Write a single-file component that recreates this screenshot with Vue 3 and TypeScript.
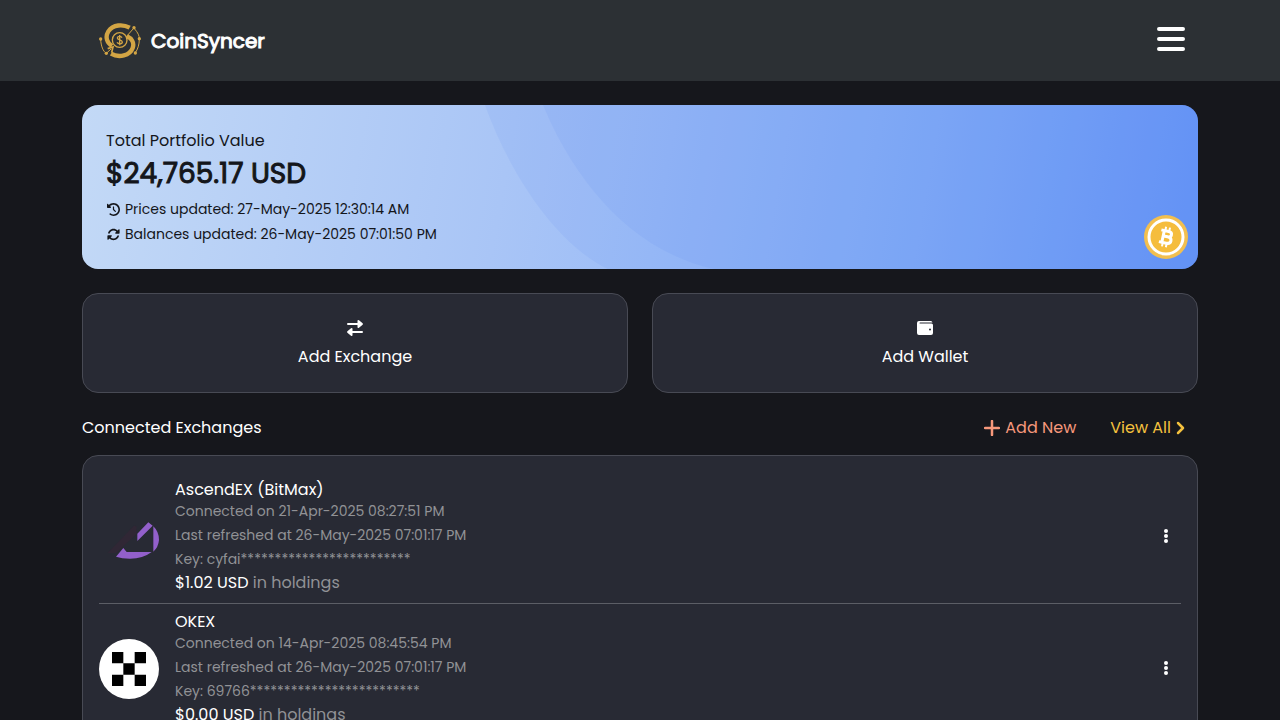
<script setup lang="ts">
interface Exchange {
  id: string
  name: string
  connected: string
  refreshed: string
  key: string
  value: string
}

const exchanges: Exchange[] = [
  {
    id: 'ascendex',
    name: 'AscendEX (BitMax)',
    connected: '21-Apr-2025 08:27:51 PM',
    refreshed: '26-May-2025 07:01:17 PM',
    key: 'cyfai' + '*'.repeat(25),
    value: '$1.02 USD',
  },
  {
    id: 'okex',
    name: 'OKEX',
    connected: '14-Apr-2025 08:45:54 PM',
    refreshed: '26-May-2025 07:01:17 PM',
    key: '69766' + '*'.repeat(25),
    value: '$0.00 USD',
  },
]
</script>

<template>
  <header class="topbar">
    <div class="container topbar-inner">
      <a class="brand" href="#">
        <svg class="brand-mark" viewBox="0 0 126 108" aria-hidden="true">
          <g fill="none" stroke="#d3a544">
            <path d="M92 14C72 3 42 4 28 25C17 43 25 60 39 69" stroke-width="13" />
            <path d="M84 40C97 46 107 58 101 75C93 98 60 106 36 92" stroke-width="13" />
            <circle cx="62" cy="51" r="22" stroke-width="4" />
            <path d="M82 41L103 17M107 18C117 29 121 39 121 47C121 66 116 79 109 89M5 49C6 69 12 85 22 91L36 78" stroke-width="3" />
            <path d="M26 77L42 72L38 89" stroke-width="5" />
            <path d="M69 44C66 38 55 39 55 45C55 52 70 49 70 57C70 64 58 64 54 58M62 36V67" stroke-width="4" />
          </g>
          <g fill="#d3a544">
            <circle cx="105" cy="14" r="5" />
            <circle cx="121" cy="47" r="5" />
            <circle cx="109" cy="90" r="5" />
            <circle cx="5" cy="48" r="5" />
            <circle cx="22" cy="91" r="5" />
          </g>
        </svg>
        <span>CoinSyncer</span>
      </a>
      <button class="menu" type="button" aria-label="Menu">
        <svg viewBox="0 0 28 24" aria-hidden="true">
          <path d="M2 2H26M2 12H26M2 22H26" fill="none" stroke="currentColor" stroke-width="4" stroke-linecap="round" />
        </svg>
      </button>
    </div>
  </header>

  <main class="container">
    <section class="banner">
      <svg class="waves" viewBox="0 0 1116 164" preserveAspectRatio="none" aria-hidden="true">
        <path d="M403 0C428 70 475 140 526 164H1116V0Z" />
        <path d="M461 0C490 70 545 145 632 164H1116V0Z" />
      </svg>
      <div class="banner-text">
        <div class="label">Total Portfolio Value</div>
        <div class="total">$24,765.17 USD</div>
        <div class="stamp">
          <svg viewBox="0 0 512 512" aria-hidden="true">
            <path d="M75 75L41 41C25.9 25.9 0 36.6 0 57.9V168c0 13.3 10.7 24 24 24H134.1c21.4 0 32.1-25.9 17-41l-30.8-30.8C155 85.5 203 64 256 64c106 0 192 86 192 192s-86 192-192 192c-40.8 0-78.6-12.7-109.7-34.4c-14.5-10.1-34.4-6.6-44.6 7.9s-6.6 34.4 7.9 44.6C151.2 495 201.7 512 256 512c141.4 0 256-114.6 256-256S397.4 0 256 0C185.3 0 121.3 28.7 75 75zm181 53c-13.3 0-24 10.7-24 24V256c0 6.4 2.5 12.5 7 17l72 72c9.4 9.4 24.6 9.4 33.9 0s9.4-24.6 0-33.9l-65-65V152c0-13.3-10.7-24-24-24z" />
          </svg>
          <span>Prices updated: 27-May-2025 12:30:14 AM</span>
        </div>
        <div class="stamp">
          <svg viewBox="0 0 512 512" aria-hidden="true">
            <path d="M142.9 142.9c62.2-62.2 162.7-62.5 225.3-1L327 183c-6.9 6.9-8.9 17.2-5.2 26.2s12.5 14.8 22.2 14.8H472c13.3 0 24-10.7 24-24V72c0-9.7-5.8-18.5-14.8-22.2s-19.3-1.7-26.2 5.2L413.4 96.6c-87.6-86.5-228.7-86.2-315.8 1C73.2 122 55.6 150.7 44.8 181.4c-5.9 16.7 2.9 34.9 19.5 40.8s34.9-2.9 40.8-19.5c7.7-21.8 20.2-42.3 37.8-59.8zM16 312V440c0 9.7 5.8 18.5 14.8 22.2s19.3 1.7 26.2-5.2l41.6-41.6c87.6 86.5 228.7 86.2 315.8-1c24.4-24.4 42.1-53.1 52.9-83.7c5.9-16.7-2.9-34.9-19.5-40.8s-34.9 2.9-40.8 19.5c-7.7 21.8-20.2 42.3-37.8 59.8c-62.2 62.2-162.7 62.5-225.3 1L185 329c6.9-6.9 8.9-17.2 5.2-26.2s-12.5-14.8-22.2-14.8H40c-13.3 0-24 10.7-24 24z" />
          </svg>
          <span>Balances updated: 26-May-2025 07:01:50 PM</span>
        </div>
      </div>
      <svg class="coin" viewBox="0 0 44 44" aria-hidden="true">
        <circle cx="22" cy="22" r="22" fill="#f2bf4f" />
        <circle cx="22" cy="22" r="17" fill="#f5bd3d" stroke="#fff" stroke-width="3" />
        <g transform="rotate(12 22 22)" fill="none" stroke="#fff">
          <path d="M16 16H23.500C28 16 28 21.500 23.500 21.500H19.500M23.500 21.500C29 21.500 29 28 23.500 28H16M19 16V28" stroke-width="3" />
          <path d="M20 12V16M24 12V16M20 28V32M24 28V32" stroke-width="2" />
        </g>
      </svg>
    </section>

    <div class="actions">
      <button class="action" type="button">
        <svg viewBox="0 0 16 16" aria-hidden="true">
          <path d="M1 4H12M4 12H15" fill="none" stroke="currentColor" stroke-width="2" stroke-linecap="round" />
          <path d="M10.500 1Q10.500 -.6 12 .3L15.600 3.200Q16.400 4 15.600 4.800L12 7.700Q10.500 8.600 10.500 7ZM5.500 9Q5.500 7.400 4 8.300L.4 11.200Q-.4 12 .4 12.800L4 15.700Q5.500 16.600 5.500 15Z" fill="currentColor" />
        </svg>
        <span>Add Exchange</span>
      </button>
      <button class="action" type="button">
        <svg viewBox="0 0 16 16" aria-hidden="true">
          <path fill-rule="evenodd" fill="currentColor" d="M2 1H14Q15 1 15.500 2.500H3Q2.500 2.500 2.500 3T3 3.500H14.500Q16 3.500 16 5V13Q16 15 14 15H2Q0 15 0 13V3Q0 1 2 1ZM13 8.500A1 1 0 1 0 13 10.500A1 1 0 1 0 13 8.500Z" />
        </svg>
        <span>Add Wallet</span>
      </button>
    </div>

    <div class="section-head">
      <h2>Connected Exchanges</h2>
      <nav class="links">
        <a class="add" href="#">
          <svg viewBox="0 0 16 16" aria-hidden="true">
            <path d="M8 1V15M1 8H15" fill="none" stroke="currentColor" stroke-width="2.500" stroke-linecap="round" />
          </svg>
          <span>Add New</span>
        </a>
        <a class="all" href="#">
          <span>View All</span>
          <svg viewBox="0 0 9 14" aria-hidden="true">
            <path d="M2 2L7 7L2 12" fill="none" stroke="currentColor" stroke-width="2.500" stroke-linecap="round" stroke-linejoin="round" />
          </svg>
        </a>
      </nav>
    </div>

    <ul class="list">
      <li v-for="ex in exchanges" :key="ex.id" class="row">
        <svg v-if="ex.id === 'ascendex'" class="logo" viewBox="0 0 180 180" aria-hidden="true">
          <path d="M26 138L105 56L113 58L112 81L52 138Z" fill="#302735" />
          <path d="M115 80L148 46L161 56L115 102ZM163 58Q180 74 180 99Q178 121 163 134ZM51 149L73 123L83 135H158Q132 155 93 155Q68 155 51 149Z" fill="#9360cb" />
        </svg>
        <svg v-else class="logo" viewBox="0 0 180 180" aria-hidden="true">
          <circle cx="90" cy="90" r="90" fill="#fff" />
          <path d="M39 39H73V73H39ZM107 39H141V73H107ZM73 73H107V107H73ZM39 107H73V141H39ZM107 107H141V141H107Z" fill="#000" />
        </svg>
        <div class="info">
          <h3>{{ ex.name }}</h3>
          <div class="meta">Connected on {{ ex.connected }}</div>
          <div class="meta">Last refreshed at {{ ex.refreshed }}</div>
          <div class="meta">Key: {{ ex.key }}</div>
          <div class="holdings"><strong>{{ ex.value }}</strong> in holdings</div>
        </div>
        <button class="more" type="button" :aria-label="`Options for ${ex.name}`">
          <svg viewBox="0 0 4 14" aria-hidden="true">
            <circle cx="2" cy="2" r="2" />
            <circle cx="2" cy="7" r="2" />
            <circle cx="2" cy="12" r="2" />
          </svg>
        </button>
      </li>
    </ul>
  </main>
</template>

<style>
body {
  background: #16171c;
}
</style>

<style scoped>
* {
  box-sizing: border-box;
}

.topbar,
.container {
  font-family: Poppins, Inter, "Liberation Sans", sans-serif;
  font-size: 16px;
  line-height: 24px;
  color: #fff;
}

.container {
  max-width: 1140px;
  margin: 0 auto;
  padding: 0 12px;
}

.topbar {
  background: #2c3034;
  margin-bottom: 24px;
}

.topbar-inner {
  display: flex;
  align-items: center;
  justify-content: space-between;
  min-height: 81px;
}

.brand {
  display: flex;
  align-items: center;
  gap: 10px;
  margin-left: 17px;
  color: #fff;
  font-size: 20px;
  font-weight: 400;
  -webkit-text-stroke: 1px currentColor;
  text-decoration: none;
}

.brand-mark {
  width: 42px;
  height: 36px;
}

button {
  font: inherit;
  color: inherit;
  border: 0;
  background: none;
  padding: 0;
  cursor: pointer;
}

.menu {
  margin-right: 12px;
  padding-bottom: 4px;
}

.menu svg {
  display: block;
  width: 30px;
  height: 24px;
}

.banner {
  position: relative;
  overflow: hidden;
  padding: 24px 24px 22px;
  border-radius: 16px;
  color: #14161b;
  background: linear-gradient(100deg, #c3d9f6 0%, #a9c5f6 38%, #9dbdf7 52%, #86aff7 75%, #6a98f7 100%);
}

.waves {
  position: absolute;
  inset: 0;
  width: 100%;
  height: 100%;
  fill: #3f78ee;
  fill-opacity: 0.08;
}

.banner-text {
  position: relative;
}

.total {
  font-size: 28px;
  line-height: 42px;
  font-weight: 400;
  -webkit-text-stroke: 1px currentColor;
  margin-bottom: 2px;
}

.stamp {
  display: flex;
  align-items: center;
  gap: 5px;
  font-size: 14px;
  line-height: 25px;
}

.stamp svg {
  width: 13px;
  height: 13px;
  margin-left: 1px;
  fill: currentColor;
}

.coin {
  position: absolute;
  right: 10px;
  bottom: 10px;
  width: 44px;
  height: 44px;
}

.actions {
  display: grid;
  grid-template-columns: 1fr 1fr;
  gap: 24px;
  margin: 24px 0 20px;
}

.action {
  display: flex;
  flex-direction: column;
  align-items: center;
  gap: 8px;
  padding: 25px 24px 23px;
  border: 1px solid #484a54;
  border-radius: 16px;
  background: #282a34;
}

.action svg {
  width: 16px;
  height: 18px;
  overflow: visible;
}

.section-head {
  display: flex;
  align-items: center;
  justify-content: space-between;
  margin-bottom: 15px;
  padding-top: 3px;
}

h2,
h3 {
  margin: 0;
  font-size: 16px;
  font-weight: 400;
}

.links {
  display: flex;
  gap: 34px;
  padding-right: 13px;
}

.links a {
  display: flex;
  align-items: center;
  gap: 5px;
  text-decoration: none;
}

.add {
  color: #f7987b;
}

.add svg {
  width: 16px;
  height: 16px;
}

.all {
  color: #f4c13e;
}

.all svg {
  width: 9px;
  height: 14px;
}

.list {
  list-style: none;
  margin: 0;
  padding: 16px;
  border: 1px solid #484a54;
  border-radius: 16px;
  background: #282a34;
}

.row {
  display: flex;
  align-items: center;
  gap: 16px;
  padding: 7px 0 8px;
  border-bottom: 1px solid #5c5e66;
}

.row:last-child {
  border-bottom: 0;
}

.logo {
  flex: none;
  width: 60px;
  height: 60px;
}

.info {
  flex: 1;
  padding-top: 2px;
}

h3 {
  line-height: 18px;
}

.meta {
  font-size: 14px;
  color: #919296;
}

.holdings {
  line-height: 24px;
  color: #919296;
}

.holdings strong {
  font-weight: 400;
  color: #fff;
}

.more {
  padding: 4px 13px 6px;
}

.more svg {
  display: block;
  width: 4px;
  height: 14px;
  fill: #fff;
}
</style>
